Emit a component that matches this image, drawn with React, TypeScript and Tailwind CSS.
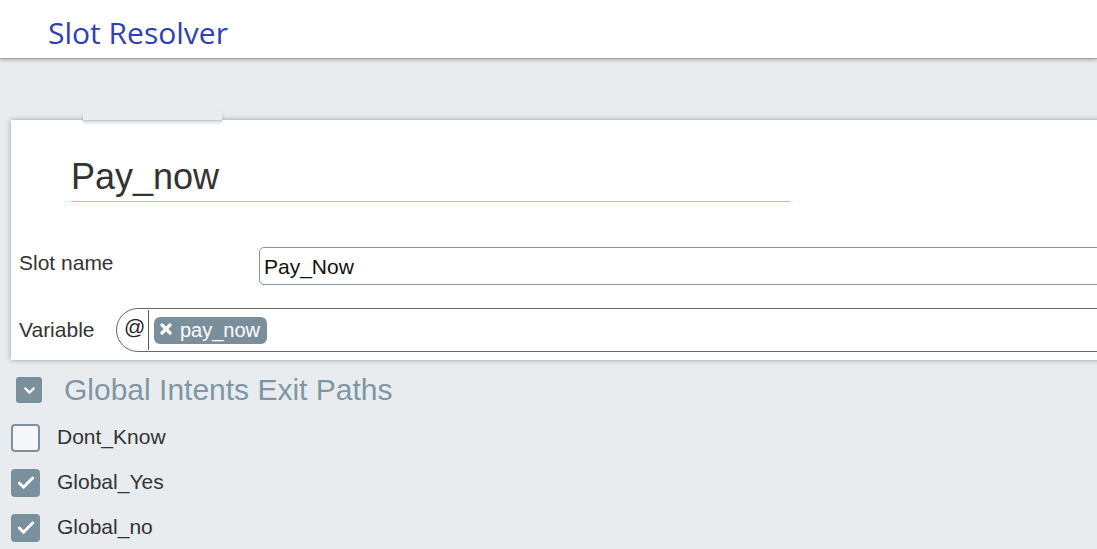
import { Check, ChevronDown } from "lucide-react";

const exitPaths = [
  { name: "Dont_Know", checked: false },
  { name: "Global_Yes", checked: true },
  { name: "Global_no", checked: true },
];

const App = () => {
  return (
    <div className="w-[1097px] h-[549px] overflow-hidden bg-[#e9ecef] font-['Liberation_Sans',Arial,sans-serif]">
      {/* Header */}
      <header className="relative z-10 h-[59px] bg-white border-b border-[#a3a6a8] shadow-[0_2px_3px_rgba(0,0,0,0.18)] pl-[48px] pt-[13px]">
        <h1 className="font-['Open_Sans',sans-serif] text-[30px] leading-[40px] text-[#2f40b6]">
          Slot Resolver
        </h1>
      </header>

      <div className="pt-[61px]">
        {/* Card */}
        <div className="relative ml-[11px] w-[1120px] bg-white shadow-[0_0_5px_rgba(0,0,0,0.35)] pt-[37px] pb-[8px]">
          <div className="absolute -top-[10px] left-[72px] w-[139px] h-[11px] bg-[#e9ecef] border-b border-[#c4c6c8] shadow-[0_2px_3px_rgba(0,0,0,0.15)]" />

          <div className="pl-[60px]">
            <div className="w-[720px] border-b border-[#f0c23b] pb-[4px]">
              <h2 className="text-[36px] leading-[40px] text-[#333]">Pay_now</h2>
            </div>
          </div>

          {/* Slot name */}
          <div className="flex items-center mt-[45px] pl-[8px]">
            <label className="w-[240px] text-[21px] leading-[24px] text-[#333] -mt-[7px]">
              Slot name
            </label>
            <div className="flex-1 h-[38px] border border-[#8197a3] rounded-l-[5px] flex items-center pl-[4px]">
              <span className="text-[21px] leading-[24px] text-[#111] pt-[1px]">Pay_Now</span>
            </div>
          </div>

          {/* Variable */}
          <div className="flex items-center mt-[23px] pl-[8px]">
            <label className="w-[97px] text-[21px] leading-[24px] text-[#333]">Variable</label>
            <div className="flex-1 h-[44px] border border-[#666] rounded-l-[22px] flex items-center">
              <span className="w-[32px] pl-[7px] border-r border-[#555] h-[40px] flex items-center text-[21px] text-[#222] -mt-[1px] pb-[5px]">
                @
              </span>
              <span className="ml-[5px] h-[27px] pl-[6px] pr-[7px] rounded-[6px] bg-[#7a8f9b] flex items-center gap-[8px] text-white text-[20px] leading-[24px]">
                <svg width="12" height="12" viewBox="0 0 12 12" className="-mt-[3px]">
                  <path d="M2 2 L10 10 M10 2 L2 10" stroke="white" strokeWidth="3.2" strokeLinecap="round" />
                </svg>
                pay_now
              </span>
            </div>
          </div>
        </div>

        {/* Global intents */}
        <div className="flex items-center mt-[13px] pl-[16px]">
          <span className="w-[26px] h-[26px] rounded-[3px] bg-[#7a909c] flex items-center justify-center">
            <ChevronDown className="w-[17px] h-[17px] text-white" strokeWidth={3} />
          </span>
          <span className="ml-[22px] text-[30px] leading-[34px] text-[#7f97a4]">
            Global Intents Exit Paths
          </span>
        </div>

        <div className="mt-[17px] pl-[11px] flex flex-col gap-[17px]">
          {exitPaths.map((p) => (
            <div key={p.name} className="flex items-center h-[28px]">
              {p.checked ? (
                <span className="w-[29px] h-[28px] rounded-[4px] bg-[#7a909c] flex items-center justify-center">
                  <Check className="w-[20px] h-[20px] text-white" strokeWidth={3.5} />
                </span>
              ) : (
                <span className="w-[29px] h-[28px] rounded-[4px] border-2 border-[#7a909c] bg-[#f4f6f7]" />
              )}
              <span className="ml-[17px] text-[21px] leading-[24px] text-[#333] -mt-[2px]">{p.name}</span>
            </div>
          ))}
        </div>
      </div>
    </div>
  );
};

export default App;
